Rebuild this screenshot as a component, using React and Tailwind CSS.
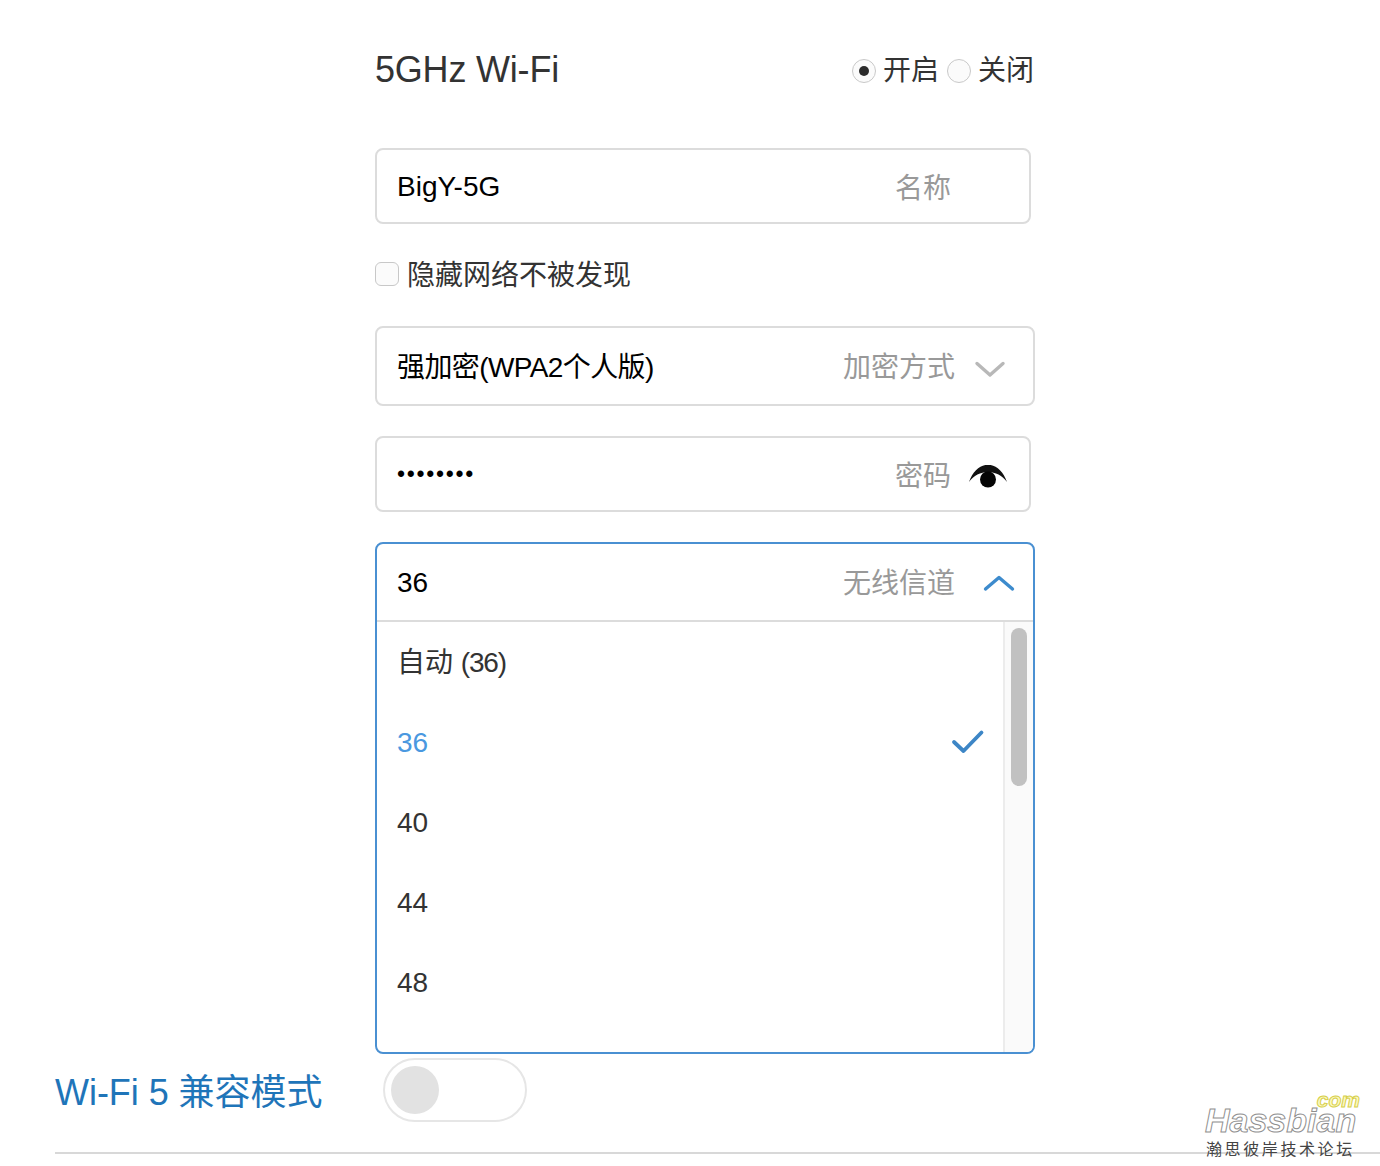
const stack = "[font-family:'Liberation_Sans','Noto_Sans_CJK_SC',sans-serif]";

function Chevron({ up }) {
  return (
    <svg width="32" height="20" viewBox="0 0 32 20" fill="none" className="block">
      <path
        d={up ? "M2.5 16 L16 4.5 L29.5 16" : "M3 4.5 L16 16 L29 4.5"}
        stroke={up ? "#3d8bcd" : "#b8b8b8"}
        strokeWidth="3.4"
        strokeLinecap="round"
        strokeLinejoin="round"
      />
    </svg>
  );
}

function Eye() {
  return (
    <svg width="38" height="26" viewBox="0 0 38 26" className="block">
      <path d="M0 17 C8 -6 30 -6 38 17 C29 3.5 9 3.5 0 17 Z" fill="#111" />
      <circle cx="19" cy="14.5" r="8" fill="#050505" />
    </svg>
  );
}

function Radio({ on }) {
  return (
    <span className="flex h-6 w-6 shrink-0 items-center justify-center rounded-full border border-[#c9c9c9] bg-[#fbfbfb]">
      {on && <span className="h-2.5 w-2.5 rounded-full bg-[#2b2b2b]" />}
    </span>
  );
}

const items = ["auto", "36", "40", "44", "48"];

export default function App() {
  return (
    <div className={`relative h-[1166px] w-[1380px] overflow-hidden bg-white pl-[55px] text-[#333] ${stack}`}>
      <div className="ml-[320px] w-[660px]">
        <div className="mt-[44px] flex h-[50px] items-center justify-between pr-[1px]">
          <span className="pt-[2px] text-[36px] leading-[50px] tracking-[-0.2px] text-[#333]">5GHz Wi-Fi</span>
          <div className="flex items-center pt-[3px] text-[28px] leading-[40px]">
            <Radio on />
            <span className="ml-[7px] mr-[8px]">开启</span>
            <Radio />
            <span className="ml-[7px]">关闭</span>
          </div>
        </div>

        <div className="mt-[54px] flex h-[76px] w-[656px] items-center justify-between rounded-lg border-2 border-[#dcdcdc] pl-[20px] pr-[78px] text-[28px] text-black">
          <span className="pt-[2px]">BigY-5G</span>
          <span className="pt-[6px] text-[#999]">名称</span>
        </div>

        <div className="mt-[30px] flex h-[40px] items-center">
          <span className="h-6 w-6 rounded-md border border-[#c8c8c8] bg-[#fbfbfb]" />
          <span className="ml-[8px] pt-[4px] text-[28px]">隐藏网络不被发现</span>
        </div>

        <div className="mt-[32px] flex h-[80px] items-center justify-between rounded-lg border-2 border-[#dcdcdc] pl-[20px] pr-[27px] text-[28px] text-black">
          <span className="pt-[3px] tracking-[-0.6px]">强加密(WPA2个人版)</span>
          <span className="flex items-center gap-[19px] text-[#999]">
            <span className="pt-[4px]">加密方式</span>
            <span className="pt-[6px]"><Chevron /></span>
          </span>
        </div>

        <div className="mt-[30px] flex h-[76px] w-[656px] items-center justify-between rounded-lg border-2 border-[#dcdcdc] pl-[20px] pr-[22px] text-[28px] text-black">
          <span className="text-[23px] tracking-[1.7px]">••••••••</span>
          <span className="flex items-center gap-[18px] text-[#999]">
            <span className="pt-[6px]">密码</span>
            <span className="pt-[8px]"><Eye /></span>
          </span>
        </div>

        <div className="mt-[30px] h-[512px] overflow-hidden rounded-lg border-2 border-[#4a90d2]">
          <div className="flex h-[78px] items-center justify-between border-b-2 border-[#dcdcdc] pl-[20px] pr-[18px] text-[28px] text-black">
            <span className="pt-[2px]">36</span>
            <span className="flex items-center gap-[28px] text-[#999]">
              <span className="pt-[3px]">无线信道</span>
              <span className="pt-[2px]"><Chevron up /></span>
            </span>
          </div>
          <div className="flex h-[430px]">
            <ul className="flex-1 pl-[20px] pr-[18px] text-[28px]">
              {items.map((t) => (
                <li key={t} className={`flex h-[80px] items-center justify-between ${t === "36" ? "text-[#4a98e0]" : ""}`}>
                  {t === "auto" ? (
                    <span className="pt-[2px]">自动 <span className="tracking-[-1.2px]">(36)</span></span>
                  ) : (
                    <span className="pt-[2px]">{t}</span>
                  )}
                  {t === "36" && (
                    <svg width="34" height="26" viewBox="0 0 34 26" fill="none" className="block">
                      <path d="M3 13 L12.5 22 L30.5 3.5" stroke="#3d86c6" strokeWidth="3.8" strokeLinecap="round" strokeLinejoin="round" />
                    </svg>
                  )}
                </li>
              ))}
            </ul>
            <div className="w-[30px] shrink-0 border-l-2 border-[#ececec] bg-[#fafafa] pl-[6px] pt-[6px]">
              <div className="h-[158px] w-[16px] rounded-lg bg-[#c1c1c1]" />
            </div>
          </div>
        </div>
      </div>

      <div className="mt-[4px] flex h-[64px] items-center">
        <span className="w-[328px] pt-[6px] text-[36px] leading-none tracking-[-0.05px] text-[#1f75b9]">Wi-Fi 5 兼容模式</span>
        <span className="flex h-[64px] w-[144px] items-center rounded-full border-2 border-[#e6e6e6] pl-[6px]">
          <span className="h-[48px] w-[48px] rounded-full bg-[#e2e2e2]" />
        </span>
      </div>

      <div className="mt-[30px] h-[2px] bg-[#d8d8d8]" />

      <div className="absolute left-[1205px] top-[1092px] w-[160px]">
        <div className="flex h-[48px] flex-col">
          <span className="self-end pr-[5px] text-[21px] font-bold italic leading-[15px] text-[#fdf9c0] [-webkit-text-stroke:1px_#d6cf4a]">com</span>
          <span className="text-[34px] font-bold italic leading-[27px] text-white [-webkit-text-stroke:1px_#8f8f8f]">Hassbian</span>
        </div>
        <div className="whitespace-nowrap pl-[1px] text-[16px] leading-[20px] tracking-[2.6px] text-[#444]">瀚思彼岸技术论坛</div>
      </div>
    </div>
  );
}
